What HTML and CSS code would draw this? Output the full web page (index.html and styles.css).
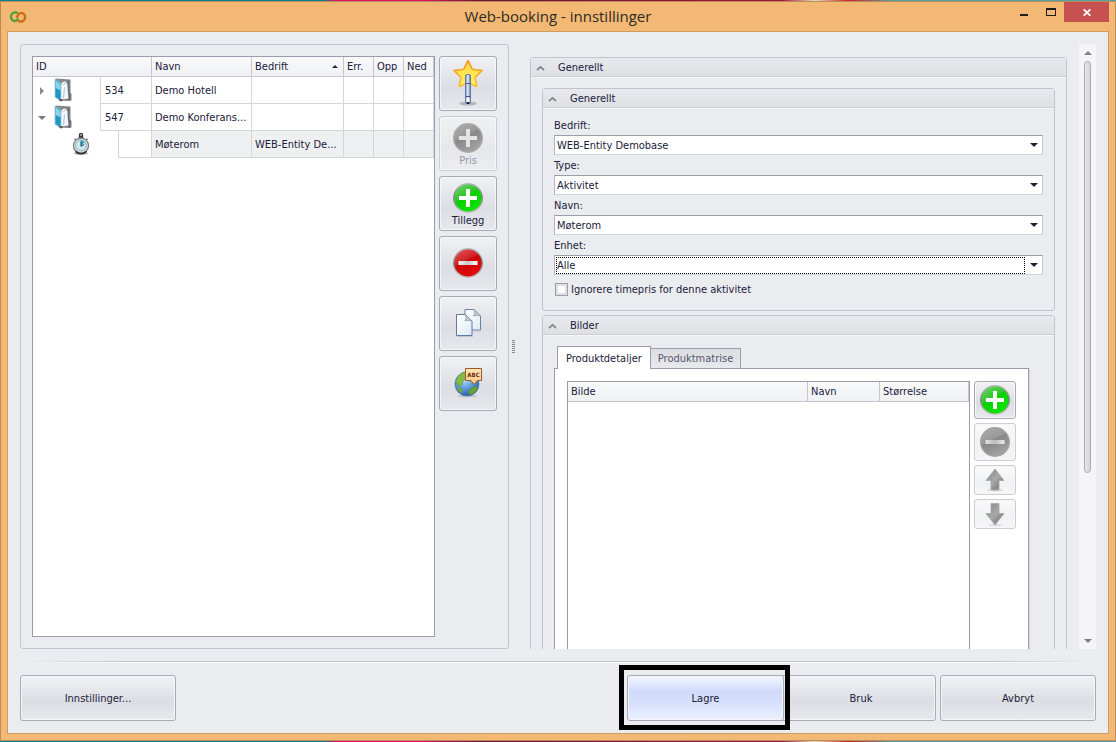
FILE: index.html
```html
<!DOCTYPE html>
<html lang="no">
<head>
<meta charset="utf-8">
<title>Web-booking - innstillinger</title>
<link rel="stylesheet" href="styles.css">
</head>
<body>
<svg class="defs" aria-hidden="true">
  <defs>
    <linearGradient id="gGreen" x1="0" y1="0" x2="0.6" y2="1"><stop offset="0" stop-color="#6fd66a"/><stop offset=".48" stop-color="#2fc62b"/><stop offset=".52" stop-color="#0ccf06"/><stop offset="1" stop-color="#0be400"/></linearGradient>
    <linearGradient id="gRed" x1="0" y1="0" x2="0.5" y2="1"><stop offset="0" stop-color="#e4575a"/><stop offset=".48" stop-color="#d02226"/><stop offset=".52" stop-color="#c80508"/><stop offset="1" stop-color="#e30a0a"/></linearGradient>
    <linearGradient id="gGrey" x1="0" y1="0" x2="0.5" y2="1"><stop offset="0" stop-color="#adadad"/><stop offset=".48" stop-color="#989898"/><stop offset=".52" stop-color="#878787"/><stop offset="1" stop-color="#a0a0a0"/></linearGradient>
    <linearGradient id="gRim" x1="0" y1="0" x2="0" y2="1"><stop offset="0" stop-color="#b9bdbb"/><stop offset=".5" stop-color="#7f8582"/><stop offset="1" stop-color="#c3c7c5"/></linearGradient>
    <linearGradient id="gBar" x1="0" y1="0" x2="1" y2="0"><stop offset="0" stop-color="#f4f4f4"/><stop offset=".5" stop-color="#c9c9c9"/><stop offset="1" stop-color="#fff"/></linearGradient>
    <linearGradient id="gStar" x1="0" y1="0" x2="0" y2="1"><stop offset="0" stop-color="#ffd24a"/><stop offset=".6" stop-color="#ffea55"/><stop offset="1" stop-color="#fff35e"/></linearGradient>
    <linearGradient id="gStarEdge" x1="0" y1="0" x2="0" y2="1"><stop offset="0" stop-color="#f7941a"/><stop offset="1" stop-color="#f6c132"/></linearGradient>
    <linearGradient id="gWand" x1="0" y1="0" x2="1" y2="0"><stop offset="0" stop-color="#6f86b4"/><stop offset=".45" stop-color="#e9f0fb"/><stop offset="1" stop-color="#5f78aa"/></linearGradient>
    <linearGradient id="gArrow" x1="0" y1="0" x2="1" y2="1"><stop offset="0" stop-color="#858585"/><stop offset=".5" stop-color="#a8a8a8"/><stop offset=".75" stop-color="#878787"/><stop offset="1" stop-color="#c4c4c4"/></linearGradient>
    <linearGradient id="gPage" x1="0" y1="0" x2="1" y2="1"><stop offset="0" stop-color="#fff"/><stop offset="1" stop-color="#dfeaf6"/></linearGradient>
    <radialGradient id="gGlobe" cx=".4" cy=".3" r=".75"><stop offset="0" stop-color="#bfe0fa"/><stop offset=".5" stop-color="#5d9ddb"/><stop offset="1" stop-color="#2459a4"/></radialGradient>
    <linearGradient id="gTag" x1="0" y1="0" x2="0" y2="1"><stop offset="0" stop-color="#ffe6b8"/><stop offset="1" stop-color="#fbc583"/></linearGradient>
    <symbol id="plus" viewBox="0 0 32 32">
      <circle cx="16" cy="16" r="15" fill="url(#gRim)"/><circle cx="16" cy="16" r="13.6" fill="url(#gGreen)"/>
      <path d="M14 7h4v7h7v4h-7v7h-4v-7H7v-4h7z" fill="#fff"/>
    </symbol>
    <symbol id="plus-grey" viewBox="0 0 32 32">
      <circle cx="16" cy="16" r="15" fill="#a9a9a9"/><circle cx="16" cy="16" r="13.6" fill="url(#gGrey)"/>
      <path d="M14 7h4v7h7v4h-7v7h-4v-7H7v-4h7z" fill="#e4e4e4"/>
    </symbol>
    <symbol id="minus" viewBox="0 0 32 32">
      <circle cx="16" cy="16" r="15" fill="url(#gRim)"/><circle cx="16" cy="16" r="13.6" fill="url(#gRed)"/>
      <path d="M6.500 14h19v4h-19z" fill="url(#gBar)"/>
    </symbol>
    <symbol id="minus-grey" viewBox="0 0 32 32">
      <circle cx="16" cy="16" r="15" fill="#a2a2a2"/><circle cx="16" cy="16" r="13.6" fill="url(#gGrey)"/>
      <path d="M6.500 14h19v4h-19z" fill="url(#gBar)" opacity=".8"/>
    </symbol>
    <symbol id="arrow-up" viewBox="0 0 24 24">
      <ellipse cx="12" cy="22" rx="8" ry="1.400" fill="#d9d9dc"/>
      <path d="M12 1l9 11.500h-5V22H8v-9.500H3z" fill="url(#gArrow)" stroke="#a6a6a6" stroke-width=".8"/>
    </symbol>
    <symbol id="arrow-down" viewBox="0 0 24 24">
      <ellipse cx="12" cy="23" rx="7" ry="1" fill="#dcdcdf"/>
      <path d="M12 23l9-11.500h-5V1.500H8v10H3z" fill="url(#gArrow)" stroke="#a6a6a6" stroke-width=".8"/>
    </symbol>
    <symbol id="folder" viewBox="0 0 18 24">
      <path d="M1.500 .5l15 1v13l1 1.500v6.500l-2.500.6L6 22.500z" fill="#85878a"/>
      <path d="M15.200 2v12l1.500 2.500v6l-3-.5V3z" fill="#6b6e71"/>
      <path d="M7 8c0-3 2-4.500 3.500-4.500S13.500 5 13.500 8v2l1 10.500-7.500 1z" fill="#f1f6fa"/>
      <path d="M9.500 7c.5-1.500 1.500-2 2.500-1.500M10.500 9.500L9.500 20" stroke="#a9c6d6" fill="none"/>
      <path d="M1 1l6 4v17.800l-6-3.600z" fill="#1b98c4" stroke="#b4c4cc" stroke-width=".8"/>
      <path d="M1.600 2.500l4.900 3.500v6.500L1.600 10z" fill="#8ad4ea"/>
      <path d="M4 21.500l2.800 2 2-.8V21z" fill="#5b5e61"/>
    </symbol>
    <symbol id="clock" viewBox="0 0 18 24">
      <ellipse cx="9" cy="21.500" rx="7.500" ry="1.500" fill="#bfc2c4"/>
      <path d="M6.800 3a2.200 2.200 0 1 1 4.400 0v3.500H6.800z" fill="#3a3d40"/>
      <path d="M8 2.500h2v1H8z" fill="#e9ecec"/>
      <path d="M2.500 6.800l1.600 1.600M15.500 6.800l-1.600 1.600" stroke="#8d9396" stroke-width="2"/>
      <circle cx="9" cy="13.800" r="7.600" fill="#d3d8da" stroke="#7a8184" stroke-width="1.200"/>
      <circle cx="9" cy="13.500" r="5.300" fill="#c9e9f0" stroke="#8fa6ad" stroke-width=".8"/>
      <path d="M9 13.500V8.500a5 5 0 0 1 3.600 1.800z" fill="#22a9cc"/>
      <path d="M9 14.500V9.500M9 14l3-1.500" stroke="#23404a" fill="none"/>
      <path d="M3.500 19.300a7.600 7.600 0 0 0 11 0" stroke="#2f3336" stroke-width="1.700" fill="none"/>
    </symbol>
    <symbol id="chevron" viewBox="0 0 9 6"><path d="M1 5l3.500-3.200L8 5" fill="none" stroke="#82848f" stroke-width="1.700"/></symbol>
  </defs>
</svg>

<div class="window">
  <header class="titlebar">
    <svg class="app-icon" viewBox="0 0 18 12" aria-hidden="true">
      <path d="M8.800 2.200C7.500 1.400 5.500 1.200 4 2 1.200 3.500 1.200 8 3.800 9.500c2 1.100 4.300.3 5.400-2" fill="none" stroke="#4e9e3b" stroke-width="2.300"/>
      <path d="M9 9.800c1.300.8 3.500 1 5 .2 2.800-1.500 2.800-6 .2-7.500-2-1.100-4.300-.3-5.400 2L7.600 6.800" fill="none" stroke="#cf6a14" stroke-width="2.300"/>
    </svg>
    <h1 class="title">Web-booking - innstillinger</h1>
    <div class="window-controls">
      <button class="win-btn" type="button" aria-label="Minimer"><svg width="8" height="8" viewBox="0 0 8 8"><path d="M0 6h8v2H0z" fill="#1e1e1e"/></svg></button>
      <button class="win-btn" type="button" aria-label="Maksimer"><svg width="10" height="8" viewBox="0 0 10 8"><path d="M0 0h10v8H0zM1 2v5h8V2z" fill="#1e1e1e" fill-rule="evenodd"/></svg></button>
      <button class="win-btn win-close" type="button" aria-label="Lukk"><svg width="8" height="7" viewBox="0 0 8 7"><path d="M.7.3l6.600 6.400M7.300.3L.7 6.700" stroke="#fff" stroke-width="1.800"/></svg></button>
    </div>
  </header>

  <main class="client">
    <div class="panes">
      <section class="left-pane">
        <div class="tree">
          <table class="grid">
            <colgroup><col class="c-id"><col class="c-name"><col><col class="c-small"><col class="c-small"><col class="c-small"></colgroup>
            <thead>
              <tr><th>ID</th><th>Navn</th><th><span class="sorted">Bedrift<span class="sort-up"></span></span></th><th>Err.</th><th>Opp</th><th>Ned</th></tr>
            </thead>
            <tbody>
              <tr>
                <td class="id-cell"><div class="node"><span class="expander"><i class="tri-right"></i></span><svg class="node-icon"><use href="#folder"/></svg><span class="node-id">534</span></div></td>
                <td>Demo Hotell</td><td></td><td></td><td></td><td></td>
              </tr>
              <tr>
                <td class="id-cell"><div class="node"><span class="expander"><i class="tri-down"></i></span><svg class="node-icon"><use href="#folder"/></svg><span class="node-id">547</span></div></td>
                <td>Demo Konferans...</td><td></td><td></td><td></td><td></td>
              </tr>
              <tr class="selected">
                <td class="id-cell"><div class="node node-child"><span class="expander"></span><svg class="node-icon"><use href="#clock"/></svg><span class="node-id"></span></div></td>
                <td>Møterom</td><td>WEB-Entity De...</td><td></td><td></td><td></td>
              </tr>
            </tbody>
          </table>
        </div>
        <div class="tools">
          <button class="btn tool" type="button" aria-label="Veiviser">
            <svg width="32" height="48" viewBox="0 0 32 48">
              <ellipse cx="16" cy="44.500" rx="9" ry="2" fill="#b4b7bf"/>
              <path d="M16 1.500l4.300 8.800 9.700 1.300-7 6.700 1.800 9.200L16 23.400 7.200 27.500 9 18.300l-7-6.700 9.700-1.300z" fill="url(#gStar)" stroke="url(#gStarEdge)" stroke-width="1.600" stroke-linejoin="round"/>
              <rect x="13.500" y="15.500" width="5" height="29" rx="1.500" fill="url(#gWand)" stroke="#6079ad"/>
              <path d="M14 24.500h4M14 37.500h4" stroke="#3f588f"/>
              <path d="M14.500 39h3v5h-3z" fill="#fff"/><path d="M14.500 44h3" stroke="#222b42" stroke-width="2"/>
            </svg>
          </button>
          <button class="btn tool captioned" type="button" disabled><svg width="32" height="32"><use href="#plus-grey"/></svg><span>Pris</span></button>
          <button class="btn tool captioned" type="button"><svg width="32" height="32"><use href="#plus"/></svg><span>Tillegg</span></button>
          <button class="btn tool" type="button" aria-label="Slett"><svg width="32" height="32"><use href="#minus"/></svg></button>
          <button class="btn tool" type="button" aria-label="Kopier">
            <svg width="32" height="32" viewBox="0 0 32 32">
              <path d="M13 2.500h9l6.500 6.500v14H13z" fill="url(#gPage)" stroke="#6883ab"/>
              <path d="M22 2.500c1 3 .5 5-.5 6.500 2.500-1 5-.5 7 0z" fill="#c5cad1" stroke="#8b97a8" stroke-width=".7"/>
              <path d="M4.500 7.500h9l6.500 6.500v14.500H4.500z" fill="url(#gPage)" stroke="#5f7ba6"/>
              <path d="M13.500 7.500c1 3 .5 5-.5 6.500 2.500-1 5-.5 7 0z" fill="#c5cad1" stroke="#8b97a8" stroke-width=".7"/>
              <path d="M5 29.500h16M21 24h8" stroke="#c2c6d0"/>
            </svg>
          </button>
          <button class="btn tool" type="button" aria-label="Oversett">
            <svg width="32" height="32" viewBox="0 0 32 32">
              <ellipse cx="15" cy="29" rx="10" ry="1.500" fill="#c2c6d0"/>
              <circle cx="15" cy="17" r="12" fill="url(#gGlobe)" stroke="#4a78ae" stroke-width=".8"/>
              <path d="M6.500 9c3-3.500 5-3.800 7.500-4.300v7l-3 2-1 4-3 1.500-2.500-4-1 1c.3-3 1.500-5.500 3-7.200z" fill="#86b94a" stroke="#5b8f35" stroke-width=".6"/>
              <path d="M5 20.500c3-.5 5 1 5.500 3.500l-.5 2.500c-3-1.500-4.700-3-5-6z" fill="#6ea53c"/>
              <path d="M17 23.500c1.500-3 5-4 9-3.200-1.500 4-4.500 6.700-8 7.700-1-1.200-1.700-2.700-1-4.500z" fill="#67a338" stroke="#4c8530" stroke-width=".6"/>
              <path d="M13.500 1.500h16v12h-4l-3.500 4-3-4h-5.500z" fill="url(#gTag)" stroke="#9a5a2a"/>
              <text class="tag-text" x="21.500" y="10" text-anchor="middle">ABC</text>
            </svg>
          </button>
        </div>
      </section>

      <div class="splitter"><span class="grip"></span></div>

      <section class="right-pane">
        <div class="scroll-content">
          <section class="group outer">
            <h2 class="group-head"><svg class="chev"><use href="#chevron"/></svg>Generellt</h2>
            <div class="group-stack">
              <section class="group">
                <h3 class="group-head"><svg class="chev"><use href="#chevron"/></svg>Generellt</h3>
                <form class="form">
                  <label for="bedrift">Bedrift:</label>
                  <div class="combo"><select id="bedrift"><option>WEB-Entity Demobase</option></select></div>
                  <label for="type">Type:</label>
                  <div class="combo"><select id="type"><option>Aktivitet</option></select></div>
                  <label for="navn">Navn:</label>
                  <div class="combo"><select id="navn"><option>Møterom</option></select></div>
                  <label for="enhet">Enhet:</label>
                  <div class="combo focused"><select id="enhet"><option>Alle</option></select></div>
                  <div class="check-row"><input class="check" id="ignore" type="checkbox"><label for="ignore">Ignorere timepris for denne aktivitet</label></div>
                </form>
              </section>
              <section class="group">
                <h3 class="group-head"><svg class="chev"><use href="#chevron"/></svg>Bilder</h3>
                <div class="images">
                  <div class="tabs" role="tablist">
                    <button class="tab active" type="button" role="tab" aria-selected="true">Produktdetaljer</button>
                    <button class="tab" type="button" role="tab" aria-selected="false">Produktmatrise</button>
                  </div>
                  <div class="tab-page">
                    <div class="image-list">
                      <table class="grid">
                        <colgroup><col><col class="c-navn"><col class="c-size"></colgroup>
                        <thead><tr><th>Bilde</th><th>Navn</th><th>Størrelse</th></tr></thead>
                      </table>
                    </div>
                    <div class="image-tools">
                      <button class="btn sq" type="button" aria-label="Legg til"><svg width="32" height="32"><use href="#plus"/></svg></button>
                      <button class="btn sq" type="button" aria-label="Fjern" disabled><svg width="32" height="32"><use href="#minus-grey"/></svg></button>
                      <button class="btn sq low" type="button" aria-label="Flytt opp" disabled><svg width="24" height="24"><use href="#arrow-up"/></svg></button>
                      <button class="btn sq low" type="button" aria-label="Flytt ned" disabled><svg width="24" height="24"><use href="#arrow-down"/></svg></button>
                    </div>
                  </div>
                </div>
              </section>
            </div>
          </section>
        </div>
        <div class="scrollbar" aria-hidden="true"><i class="sb-up"></i><div class="track"><div class="thumb"></div></div><i class="sb-down"></i></div>
      </section>
    </div>

    <hr class="rule">

    <footer class="actions">
      <button class="btn action first" type="button">Innstillinger...</button>
      <button class="btn action primary" type="button">Lagre</button>
      <button class="btn action" type="button">Bruk</button>
      <button class="btn action" type="button">Avbryt</button>
    </footer>
  </main>
</div>
</body>
</html>
```
FILE: styles.css
```css
* { box-sizing: border-box; }

body {
  margin: 0;
  padding: 1px 0;
  height: 100vh;
  display: flex;
  background: linear-gradient(90deg, #0b7f8e 0 29%, #e0106a 30% 38%, #6b1136 43%, #a3133f 70%, #e8dcc0 73%, #d02025 76%, #58a0a4 80% 100%);
  color: #20203a;
  font-family: "DejaVu Sans Condensed", "DejaVu Sans", sans-serif;
  font-size: 11px;
  line-height: 14px;
}

button, select, input { font: inherit; color: inherit; margin: 0; }
svg { display: block; flex: none; }
.defs { position: absolute; width: 0; height: 0; }

/* Window frame */
.window {
  flex: 1;
  min-width: 0;
  display: flex;
  flex-direction: column;
  padding: 0 6px 6px;
  border: 1px solid #b98c58;
  background: #f3b873;
}
.titlebar {
  flex: none;
  height: 29px;
  display: grid;
  grid-template-columns: 1fr auto 1fr;
  align-items: center;
}
.app-icon { width: 18px; height: 12px; margin-left: 2px; }
.title {
  margin: 0;
  padding-bottom: 2px;
  font: 400 15px/20px "Open Sans", sans-serif;
  color: #2e2a26;
}
.window-controls { justify-self: end; align-self: start; display: flex; }
.win-btn {
  width: 27px;
  height: 20px;
  padding: 0;
  border: 0;
  background: none;
  display: grid;
  place-items: center;
}
.win-close { width: 45px; background: #c75050; }

.client {
  flex: 1;
  min-height: 0;
  display: flex;
  flex-direction: column;
  gap: 12px;
  padding: 12px;
  border: 1px solid #cf9c62;
  background: #ebecef;
}
.panes {
  flex: 1;
  min-height: 0;
  display: grid;
  grid-template-columns: minmax(0, 489fr) 21px minmax(0, 566fr);
  grid-template-rows: minmax(0, 1fr);
}

/* Left pane */
.left-pane {
  display: flex;
  gap: 4px;
  padding: 11px;
  border: 1px solid #c3c4cc;
  border-radius: 3px;
}
.tree {
  flex: 1;
  min-width: 0;
  border: 1px solid #9b9dae;
  background: #fff;
}
.grid {
  width: 100%;
  table-layout: fixed;
  border-collapse: separate;
  border-spacing: 0;
}
.grid th, .grid td {
  padding: 0 3px;
  border: solid #d5d6dc;
  border-width: 0 1px 1px 0;
  text-align: left;
  font-weight: 400;
  overflow: hidden;
  white-space: nowrap;
}
.grid th {
  height: 20px;
  border-color: #c5c6cf;
  background: linear-gradient(#f9f9fa, #f0f1f4);
}
.grid td { height: 27px; padding-top: 2px; }
.grid .id-cell { padding: 0; border-bottom: 0; }
.c-id { width: 119px; }
.c-name { width: 100px; }
.c-small { width: 30px; }
.c-navn { width: 72px; }
.c-size { width: 89px; }
.sorted { display: flex; justify-content: space-between; align-items: center; }
.sort-up {
  margin-right: 2px;
  border: solid transparent;
  border-width: 0 3px 3px;
  border-bottom-color: #25253c;
}
.selected td { background: #eff0f1; }
.selected .id-cell { background: #fff; }
.node { display: flex; align-items: center; height: 27px; }
.node-child { padding-left: 18px; }
.expander { width: 21px; display: grid; place-items: center; padding-right: 4px; }
.tri-right { border: solid transparent; border-width: 4px 0 4px 4px; border-left-color: #8a8b96; }
.tri-down { border: solid transparent; border-width: 4px 4px 0; border-top-color: #777883; }
.node-icon { width: 18px; height: 24px; margin: 0 28px 2px 0; }
.node-id {
  flex: 1;
  align-self: stretch;
  padding: 1px 0 0 4px;
  line-height: 26px;
  border: solid #d5d6dc;
  border-width: 0 0 1px 1px;
}

.tools { display: flex; flex-direction: column; gap: 5px; }

/* Buttons */
.btn {
  display: flex;
  flex-direction: column;
  align-items: center;
  justify-content: center;
  padding: 0;
  border: 1px solid #a7a9b5;
  border-radius: 3px;
  background: linear-gradient(#f1f2f5, #dfe0e5 50%, #dcdee4 60%, #e8e9ed);
  box-shadow: inset 0 0 0 1px #f6f6f9;
}
.btn:disabled { color: #9798a4; border-color: #cbccd4; background: linear-gradient(#f0f1f3, #e6e7ea 60%, #ecedf0); }
.tool { width: 58px; height: 55px; padding-bottom: 2px; }
.captioned { padding: 2px 0 0; }
.tag-text { font-size: 6px; font-weight: 700; fill: #6b2b10; }

.splitter { display: grid; place-items: center; }
.grip {
  width: 3px;
  height: 14px;
  margin-right: 12px;
  background: repeating-linear-gradient(#84868f 0 1px, transparent 1px 2px);
}

/* Right pane */
.right-pane { display: flex; gap: 12px; min-height: 0; }
.scroll-content { flex: 1; min-width: 0; overflow: hidden; padding-top: 13px; }
.group { border: 1px solid #c3c4cc; border-radius: 3px; }
.group-head {
  display: flex;
  align-items: center;
  gap: 13px;
  height: 19px;
  margin: 0;
  padding: 2px 0 0 5px;
  border-bottom: 1px solid #cfd0d7;
  background: linear-gradient(#e8e9ec, #dfe0e4);
  box-shadow: 0 1px #f6f6f8;
  font-size: 11px;
  font-weight: 400;
}
.chev { width: 9px; height: 6px; }
.group-stack { display: flex; flex-direction: column; gap: 4px; padding: 11px; }
.form { display: flex; flex-direction: column; padding: 7px 11px 11px; }
.form > label { height: 20px; line-height: 22px; }
.combo { position: relative; height: 20px; }
.combo select {
  display: block;
  appearance: none;
  width: 100%;
  height: 20px;
  padding: 1px 20px 0 2px;
  border: 1px solid #b9bac6;
  border-color: #9b9da9 #c8c9d2 #d3d4da #b4b5c2;
  border-radius: 0;
  background: #fff;
  outline: 0;
}
.combo::after {
  content: "";
  position: absolute;
  right: 5px;
  top: 8px;
  border: solid transparent;
  border-width: 4px 4px 0;
  border-top-color: #20203a;
}
.focused::before {
  content: "";
  position: absolute;
  inset: 2px 18px 1px 2px;
  border: 1px dotted #000;
}
.check-row { display: flex; align-items: center; gap: 3px; height: 20px; margin: 4px 0 0 1px; }
.check-row label { padding-top: 1px; }
.check {
  appearance: none;
  width: 13px;
  height: 13px;
  border: 1px solid #9b9dae;
  background: #fff;
  box-shadow: inset 0 0 0 2px #dfe0e6;
}

.images { padding: 11px 25px 11px 11px; }
.tabs { display: flex; align-items: flex-end; padding-left: 3px; }
.tab {
  height: 20px;
  padding: 1px 7px 0;
  border: 1px solid #9b9dae;
  border-width: 1px 1px 0 0;
  background: linear-gradient(#dcdde1, #e8e9ed);
  color: #55566a;
}
.tab.active {
  position: relative;
  z-index: 1;
  height: 23px;
  padding: 1px 8px 0;
  margin-bottom: -1px;
  border-left-width: 1px;
  background: #fff;
  color: inherit;
}
.tab-page {
  display: flex;
  gap: 4px;
  padding: 12px;
  border: 1px solid #9b9dae;
  background: #fff;
  box-shadow: 1px 1px 1px #d6d7dc;
}
.image-list { flex: 1; min-width: 0; min-height: 360px; border: 1px solid #9b9dae; }
.image-tools { display: flex; flex-direction: column; gap: 4px; }
.sq { width: 42px; height: 38px; }
.image-tools .btn:disabled { background: linear-gradient(#fafafb, #f0f1f4 60%, #f6f6f8); }
.low { height: 30px; }

.scrollbar {
  flex: none;
  width: 17px;
  display: flex;
  flex-direction: column;
  align-items: center;
  padding: 7px 0 6px;
  background: #f5f5f7;
}
.sb-up { border: solid transparent; border-width: 0 4px 4px; border-bottom-color: #7e7f8a; }
.sb-down { border: solid transparent; border-width: 4px 4px 0; border-top-color: #7e7f8a; }
.track { flex: 1; padding: 6px 0; }
.thumb {
  width: 7px;
  height: 72%;
  border: 1px solid #a7a9b5;
  border-radius: 4px;
  background: linear-gradient(90deg, #e6e7ec, #d3d4dc);
}

/* Footer */
.rule {
  flex: none;
  align-self: stretch;
  height: 2px;
  margin: 0;
  border: 0;
  background:
    linear-gradient(90deg, transparent, #c1c2ca 10% 90%, transparent) top / 100% 1px no-repeat,
    linear-gradient(90deg, transparent, #fff 10% 90%, transparent) bottom / 100% 1px no-repeat;
}
.actions { display: flex; gap: 4px; }
.action { width: 156px; height: 46px; padding-top: 1px; }
.first { margin-right: auto; }
.primary {
  position: relative;
  z-index: 1;
  width: 157px;
  margin-right: -8px;
  background: linear-gradient(#f4f7ff, #d0dbfb 35%, #d6e0fc 60%, #eaf0ff);
}
.primary + .action { padding-left: 6px; }

/* Highlight frame round the save button */
.primary::after {
  content: "";
  position: absolute;
  inset: -11px -7px -10px -9px;
  border: 5px solid #000;
}
```
